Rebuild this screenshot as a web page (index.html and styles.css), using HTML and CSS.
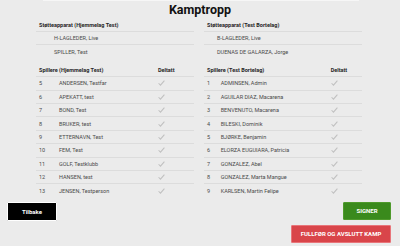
FILE: index.html
```html
<!doctype html>
<html>
    <head>
        <link rel="stylesheet" href="styles.css">
    </head>
    <body>
        <div class="topline"></div>
        <h1 class="title">Kamptropp</h1>

        <div class="columns">
            <div class="team home">
                <div class="staff">
                    <div class="row head"><span>Støtteapparat (Hjemmelag Test)</span></div>
                    <div class="row"><span class="staff-name">H-LAGLEDER, Live</span></div>
                    <div class="row"><span class="staff-name">SPILLER, Test</span></div>
                </div>

                <div class="players">
                    <div class="row head">
                        <span class="num">Spillere (Hjemmelag Test)</span>
                        <span class="name"></span>
                        <span class="played">Deltatt</span>
                    </div>
                    <div class="row"><span class="num">5</span><span class="name">ANDERSEN, Testfar</span><span class="played"><svg class="check" viewBox="0 0 8 7"><polyline points="0.6,3.8 2.8,6 7.4,0.8"/></svg></span></div>
                    <div class="row"><span class="num">6</span><span class="name">APEKATT, test</span><span class="played"><svg class="check" viewBox="0 0 8 7"><polyline points="0.6,3.8 2.8,6 7.4,0.8"/></svg></span></div>
                    <div class="row"><span class="num">7</span><span class="name">BOND, Test</span><span class="played"><svg class="check" viewBox="0 0 8 7"><polyline points="0.6,3.8 2.8,6 7.4,0.8"/></svg></span></div>
                    <div class="row"><span class="num">8</span><span class="name">BRUKER, test</span><span class="played"><svg class="check" viewBox="0 0 8 7"><polyline points="0.6,3.8 2.8,6 7.4,0.8"/></svg></span></div>
                    <div class="row"><span class="num">9</span><span class="name">ETTERNAVN, Test</span><span class="played"><svg class="check" viewBox="0 0 8 7"><polyline points="0.6,3.8 2.8,6 7.4,0.8"/></svg></span></div>
                    <div class="row"><span class="num">10</span><span class="name">FEM, Test</span><span class="played"><svg class="check" viewBox="0 0 8 7"><polyline points="0.6,3.8 2.8,6 7.4,0.8"/></svg></span></div>
                    <div class="row"><span class="num">11</span><span class="name">GOLF, Testklubb</span><span class="played"><svg class="check" viewBox="0 0 8 7"><polyline points="0.6,3.8 2.8,6 7.4,0.8"/></svg></span></div>
                    <div class="row"><span class="num">12</span><span class="name">HANSEN, test</span><span class="played"><svg class="check" viewBox="0 0 8 7"><polyline points="0.6,3.8 2.8,6 7.4,0.8"/></svg></span></div>
                    <div class="row"><span class="num">13</span><span class="name">JENSEN, Testperson</span><span class="played"><svg class="check" viewBox="0 0 8 7"><polyline points="0.6,3.8 2.8,6 7.4,0.8"/></svg></span></div>
                </div>
            </div>

            <div class="team away">
                <div class="staff">
                    <div class="row head"><span>Støtteapparat (Test Bortelag)</span></div>
                    <div class="row"><span class="staff-name">B-LAGLEDER, Live</span></div>
                    <div class="row"><span class="staff-name">DUENAS DE GALARZA, Jorge</span></div>
                </div>

                <div class="players">
                    <div class="row head">
                        <span class="num">Spillere (Test Bortelag)</span>
                        <span class="name"></span>
                        <span class="played">Deltatt</span>
                    </div>
                    <div class="row"><span class="num">1</span><span class="name">ADMINSEN, Admin</span><span class="played"><svg class="check" viewBox="0 0 8 7"><polyline points="0.6,3.8 2.8,6 7.4,0.8"/></svg></span></div>
                    <div class="row"><span class="num">2</span><span class="name">AGUILAR DIAZ, Macarena</span><span class="played"><svg class="check" viewBox="0 0 8 7"><polyline points="0.6,3.8 2.8,6 7.4,0.8"/></svg></span></div>
                    <div class="row"><span class="num">3</span><span class="name">BENVENUTO, Macarena</span><span class="played"><svg class="check" viewBox="0 0 8 7"><polyline points="0.6,3.8 2.8,6 7.4,0.8"/></svg></span></div>
                    <div class="row"><span class="num">4</span><span class="name">BILESKI, Dominik</span><span class="played"><svg class="check" viewBox="0 0 8 7"><polyline points="0.6,3.8 2.8,6 7.4,0.8"/></svg></span></div>
                    <div class="row"><span class="num">5</span><span class="name">BJØRKE, Benjamin</span><span class="played"><svg class="check" viewBox="0 0 8 7"><polyline points="0.6,3.8 2.8,6 7.4,0.8"/></svg></span></div>
                    <div class="row"><span class="num">6</span><span class="name">ELORZA EUGUIARA, Patricia</span><span class="played"><svg class="check" viewBox="0 0 8 7"><polyline points="0.6,3.8 2.8,6 7.4,0.8"/></svg></span></div>
                    <div class="row"><span class="num">7</span><span class="name">GONZALEZ, Abel</span><span class="played"><svg class="check" viewBox="0 0 8 7"><polyline points="0.6,3.8 2.8,6 7.4,0.8"/></svg></span></div>
                    <div class="row"><span class="num">8</span><span class="name">GONZALEZ, Marta Mangue</span><span class="played"><svg class="check" viewBox="0 0 8 7"><polyline points="0.6,3.8 2.8,6 7.4,0.8"/></svg></span></div>
                    <div class="row"><span class="num">9</span><span class="name">KARLSEN, Martin Felipe</span><span class="played"><svg class="check" viewBox="0 0 8 7"><polyline points="0.6,3.8 2.8,6 7.4,0.8"/></svg></span></div>
                </div>
            </div>
        </div>

        <div class="actions">
            <button class="btn btn-back">Tilbake</button>
            <div class="actions-right">
                <button class="btn btn-sign">SIGNER</button>
                <button class="btn btn-finish">FULLFØR OG AVSLUTT KAMP</button>
            </div>
        </div>
    </body>
</html>
```

FILE: styles.css
```css
* {
    box-sizing: border-box;
}
html {
    margin: 0;
    width: 100%;
    height: 100%;
}
body {
    margin: 0;
    padding: 0;
    width: 400px;
    height: 246px;
    overflow: hidden;
    background-color: #ebebeb;
    color: #4a4a4a;
    font-family: Roboto, "Liberation Sans", sans-serif;
    font-size: 5.5px;
}

.topline {
    height: 1px;
    margin: 0 41px 0 43px;
    background-color: #f6f6f6;
}

.title {
    margin: 0;
    height: 17px;
    line-height: 17px;
    text-align: center;
    font-size: 12.5px;
    font-weight: bold;
    color: #111;
}

.columns {
    display: grid;
    grid-template-columns: 158px 158px;
    column-gap: 10px;
    margin-left: 36px;
}

.row {
    display: flex;
    align-items: center;
    height: 13.4px;
    border-top: 1px solid #dcdcdc;
}
.row span {
    padding-left: 3px;
    white-space: nowrap;
}
.row.head {
    height: 13px;
    border-top: none;
    font-weight: bold;
    color: #262626;
}

.staff-name {
    margin-left: 15px;
}
.away .staff-name {
    margin-left: 10px;
}

.players {
    margin-top: 5.5px;
}
.players .num {
    width: 20px;
    flex: none;
}
.players .name {
    width: 99px;
    flex: none;
}
.away .players .num {
    width: 13.7px;
}
.away .players .name {
    width: 110px;
}
.players .played {
    display: flex;
    align-items: center;
    padding-left: 3px;
}

.check {
    width: 7px;
    height: 6px;
    fill: none;
    stroke: #c0c0c0;
    stroke-width: 1.2;
}

.actions {
    display: flex;
    justify-content: space-between;
    align-items: flex-start;
    margin-top: 5px;
    padding: 0 9px 0 7px;
}
.actions-right {
    display: flex;
    flex-direction: column;
    align-items: flex-end;
    gap: 5px;
}

.btn {
    margin: 0;
    padding: 0;
    font-family: Roboto, "Liberation Sans", sans-serif;
    font-size: 6px;
    font-weight: bold;
    color: white;
    cursor: pointer;
    border-radius: 1px;
}
.btn-back {
    width: 50px;
    height: 19px;
    background-color: #000;
    border: 1px solid #fff;
}
.btn-sign {
    width: 48px;
    height: 18px;
    background-color: #3a8a1c;
    border: 1px solid #4f9a2c;
}
.btn-finish {
    width: 100px;
    height: 18px;
    background-color: #d9454a;
    border: 1px solid #e8757a;
}
```
